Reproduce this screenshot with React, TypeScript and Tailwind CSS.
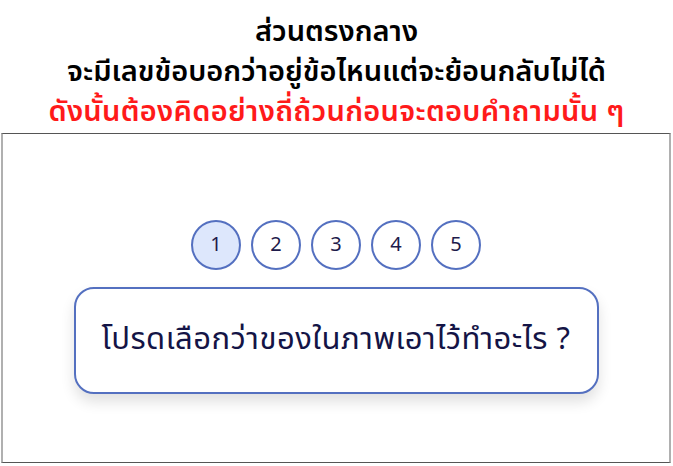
import React from "react";

const steps = [1, 2, 3, 4, 5];

export default function App() {
  const current = 1;

  return (
    <div className="w-[673px] h-[466px] bg-white flex flex-col font-['Noto_Sans_Thai','Noto_Sans',sans-serif]">
      <div className="pt-[12px] h-[133px] flex flex-col items-center text-[29px] font-semibold leading-[40px] text-black">
        <div>ส่วนตรงกลาง</div>
        <div>จะมีเลขข้อบอกว่าอยู่ข้อไหนแต่จะย้อนกลับไม่ได้</div>
        <div className="text-[#ff1a1a] tracking-[0.3px]">ดังนั้นต้องคิดอย่างถี่ถ้วนก่อนจะตอบคำถามนั้น ๆ</div>
      </div>

      <div className="ml-[1px] w-[670px] h-[330px] border-y border-y-[#555] border-x-2 border-x-[#b0b0b0] flex flex-col items-center pt-[86px]">
        <div className="flex gap-[10px]">
          {steps.map((n) => (
            <div
              key={n}
              className={`w-[50px] h-[50px] rounded-full border-2 border-[#5470c0] flex items-center justify-center text-[20px] text-[#1e1b4b] ${
                n === current ? "bg-[#dde7fc]" : "bg-white"
              }`}
            >
              {n}
            </div>
          ))}
        </div>

        <div className="mt-[17px] w-[525px] h-[107px] rounded-[20px] border-2 border-[#5470c0] bg-white shadow-[0_8px_14px_rgba(0,0,0,0.12)] flex items-center justify-center">
          <span className="text-[31px] text-[#141446] tracking-[0.5px]">โปรดเลือกว่าของในภาพเอาไว้ทำอะไร ?</span>
        </div>
      </div>
    </div>
  );
}
